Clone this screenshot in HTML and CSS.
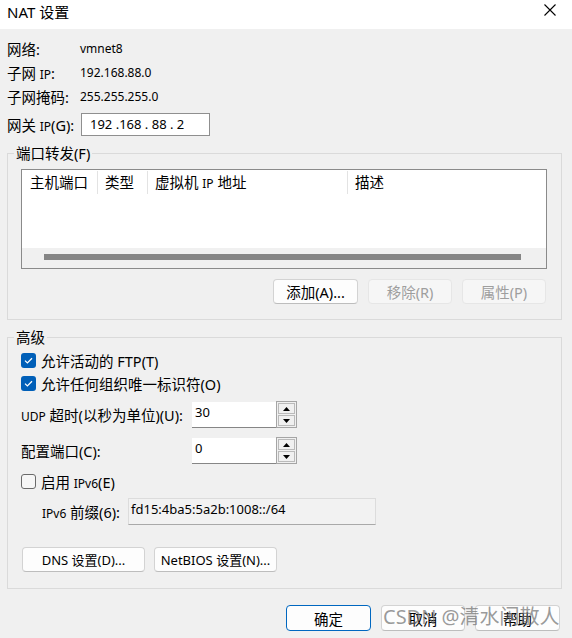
FILE: index.html
```html
<!DOCTYPE html>
<html lang="zh-CN">
<head>
  <meta charset="UTF-8">
  <title>NAT 设置</title>
  <link rel="stylesheet" href="styles.css">
</head>
<body>
  <div class="dialog">
    <div class="titlebar">
      <span class="title">NAT 设置</span>
      <svg class="close" width="12" height="12" viewBox="0 0 12 12">
        <path d="M0.5 0.5L11.5 11.5M11.5 0.5L0.5 11.5" stroke="#000" stroke-width="1.1" fill="none"/>
      </svg>
    </div>

    <div class="content">
      <div class="row"><span class="label">网络:</span><span class="value">vmnet8</span></div>
      <div class="row"><span class="label">子网 <span class="en">IP</span>:</span><span class="value">192.168.88.0</span></div>
      <div class="row"><span class="label">子网掩码:</span><span class="value">255.255.255.0</span></div>
      <div class="row gw">
        <span class="label">网关 <span class="en">IP</span>(G):</span>
        <div class="ipbox">192 .168 . 88 . 2</div>
      </div>

      <fieldset class="group">
        <legend>端口转发(F)</legend>
        <div class="list">
          <div class="list-head">
            <div class="col c1">主机端口</div>
            <div class="col c2">类型</div>
            <div class="col c3">虚拟机 <span class="en">IP</span> 地址</div>
            <div class="col c4">描述</div>
          </div>
          <div class="list-body"></div>
          <div class="hscroll"><div class="thumb"></div></div>
        </div>
        <div class="btn-row">
          <button class="btn w85">添加(A)...</button>
          <button class="btn w84" disabled>移除(R)</button>
          <button class="btn w84" disabled>属性(P)</button>
        </div>
      </fieldset>

      <fieldset class="group adv">
        <legend>高级</legend>
        <div class="check">
          <span class="box"><svg width="15" height="15" viewBox="0 0 15 15"><path d="M4 7.6l2.4 2.3 4.6-4.6" stroke="#fff" stroke-width="1.3" fill="none"/></svg></span>
          <span>允许活动的 FTP(T)</span>
        </div>
        <div class="check">
          <span class="box"><svg width="15" height="15" viewBox="0 0 15 15"><path d="M4 7.6l2.4 2.3 4.6-4.6" stroke="#fff" stroke-width="1.3" fill="none"/></svg></span>
          <span>允许任何组织唯一标识符(O)</span>
        </div>

        <div class="field udp">
          <span class="flabel"><span class="en">UDP</span> 超时(以秒为单位)(U):</span>
          <div class="num">30</div>
          <div class="spin">
            <div class="arrow"><svg width="7" height="4" viewBox="0 0 7 4"><path d="M3.5 0L7 4H0z" fill="#000"/></svg></div>
            <div class="arrow"><svg width="7" height="4" viewBox="0 0 7 4"><path d="M0 0H7L3.5 4z" fill="#000"/></svg></div>
          </div>
        </div>
        <div class="field port">
          <span class="flabel">配置端口(C):</span>
          <div class="num">0</div>
          <div class="spin">
            <div class="arrow"><svg width="7" height="4" viewBox="0 0 7 4"><path d="M3.5 0L7 4H0z" fill="#000"/></svg></div>
            <div class="arrow"><svg width="7" height="4" viewBox="0 0 7 4"><path d="M0 0H7L3.5 4z" fill="#000"/></svg></div>
          </div>
        </div>

        <div class="check v6">
          <span class="box off"></span>
          <span>启用 <span class="en">IPv6</span>(E)</span>
        </div>
        <div class="prefix">
          <span class="plabel"><span class="en">IPv6</span> 前缀(6):</span>
          <div class="pbox">fd15:4ba5:5a2b:1008::/64</div>
        </div>

        <div class="btn-row left">
          <button class="btn w123">DNS 设置(D)...</button>
          <button class="btn w123">NetBIOS 设置(N)...</button>
        </div>
      </fieldset>

      <div class="btn-row bottom">
        <button class="btn w85 default">确定</button>
        <button class="btn w84">取消</button>
        <button class="btn w85">帮助</button>
      </div>
    </div>

    <div class="watermark">CSDN @清水闲散人</div>
  </div>
</body>
</html>
```

FILE: styles.css
```css
* {
  box-sizing: border-box;
}
body {
  margin: 0;
  background: #f0f0f0;
  font-family: "Noto Sans", "Noto Sans CJK SC", sans-serif;
  font-size: 14.5px;
  color: #000;
}
.dialog {
  width: 572px;
  height: 638px;
  background: #f0f0f0;
  position: relative;
  overflow: hidden;
}
.titlebar {
  height: 29px;
  background: #fff;
  display: flex;
  justify-content: space-between;
  align-items: flex-start;
  padding: 2px 16px 0 7px;
}
.title {
  font-size: 15px;
  line-height: 20px;
}
.close {
  margin-top: 2px;
}
.content {
  padding: 7px 0 0 7px;
}
.en {
  font-size: 12px;
}

/* top info rows */
.row {
  display: flex;
  align-items: center;
  height: 24px;
}
.label {
  width: 73px;
  flex: none;
}
.value {
  font-size: 12px;
}
.row.gw {
  height: 23px;
  margin-top: 5px;
}
.ipbox {
  margin-left: 1px;
  width: 129px;
  height: 23px;
  background: #fff;
  border: 1px solid #8f8f8f;
  font-size: 13px;
  line-height: 21px;
  padding-left: 8px;
  white-space: pre;
}

/* group boxes */
.group {
  margin: 8px 0 0 0;
  width: 555px;
  min-width: 0;
  border: 1px solid #dadada;
  padding: 7px 14px 15px 13px;
}
.group legend {
  padding: 0 2px;
  margin-left: -7px;
  line-height: 18px;
}
.group.adv {
  padding-top: 3px;
  padding-bottom: 16px;
}

/* list view */
.list {
  border: 1px solid #8a8a8a;
  background: #fff;
}
.list-head {
  display: flex;
  height: 25px;
}
.col {
  height: 23px;
  margin-top: 1px;
  line-height: 23px;
  padding-left: 7px;
  border-right: 1px solid #e3e3e3;
}
.c1 { width: 76px; padding-left: 8px; }
.c2 { width: 50px; }
.c3 { width: 200px; }
.c4 { flex: 1; border-right: none; }
.list-body {
  height: 53px;
}
.hscroll {
  height: 20px;
  background: #f0f0f0;
  padding-top: 6px;
}
.thumb {
  height: 6px;
  margin: 0 25px 0 22px;
  background: #858585;
}

/* buttons */
.btn-row {
  display: flex;
  justify-content: flex-end;
  gap: 10px;
  margin-top: 10px;
  padding-right: 1px;
}
.btn {
  height: 25px;
  padding: 0;
  font: inherit;
  font-size: 14.5px;
  color: #000;
  white-space: nowrap;
  background: #fdfdfd;
  border: 1px solid #d3d3d3;
  border-bottom-color: #bdbdbd;
  border-radius: 4px;
}
.btn:disabled {
  background: #f6f6f6;
  border-color: #e6e6e6;
  color: #9e9e9e;
}
.btn.default {
  border-color: #0067c0;
}
.w85 { width: 85px; }
.w84 { width: 84px; }
.w123 {
  width: 123px;
  font-size: 13px;
}
.btn-row.left {
  justify-content: flex-start;
  gap: 9px;
  margin-top: 22px;
  padding-left: 1px;
}
.btn-row.bottom {
  margin-top: 16px;
  padding-right: 12px;
}
.btn-row.bottom .btn {
  height: 26px;
}

/* checkboxes */
.check {
  display: flex;
  align-items: center;
  gap: 5px;
  height: 23px;
}
.box {
  width: 15px;
  height: 15px;
  flex: none;
  border-radius: 3px;
  background: #005fb8;
}
.box svg {
  display: block;
}
.box.off {
  background: #f6f6f6;
  border: 1px solid #6a6a6a;
}
.check.v6 {
  height: 26px;
  margin-top: 4px;
}

/* spin fields */
.field {
  display: flex;
  align-items: center;
  height: 27px;
  margin-top: 6px;
}
.field.port {
  margin-top: 9px;
}
.flabel {
  width: 171px;
  flex: none;
}
.num {
  width: 84px;
  height: 26px;
  align-self: flex-end;
  background: #fff;
  border-bottom: 1px solid #868686;
  font-size: 13px;
  line-height: 20px;
  padding-left: 3px;
}
.spin {
  width: 21px;
  height: 27px;
  display: flex;
  flex-direction: column;
  gap: 1px;
  padding: 1px;
  border: 1px solid #a5a5a5;
}
.arrow {
  flex: 1;
  display: flex;
  align-items: center;
  justify-content: center;
  background: #f0f0f0;
  border: 1px solid #bababa;
}

/* ipv6 prefix */
.prefix {
  display: flex;
  align-items: center;
  height: 27px;
  margin-top: 4px;
  padding-left: 21px;
}
.plabel {
  width: 86px;
  flex: none;
}
.pbox {
  width: 248px;
  height: 27px;
  background: #f2f2f2;
  border: 1px solid #dcdcdc;
  border-bottom-color: #a9a9a9;
  font-size: 13px;
  line-height: 20px;
  padding-left: 2px;
}

.watermark {
  position: absolute;
  left: 383px;
  top: 604px;
  font-size: 20px;
  line-height: 26px;
  color: rgba(110, 110, 110, 0.7);
  white-space: nowrap;
  pointer-events: none;
}
```
